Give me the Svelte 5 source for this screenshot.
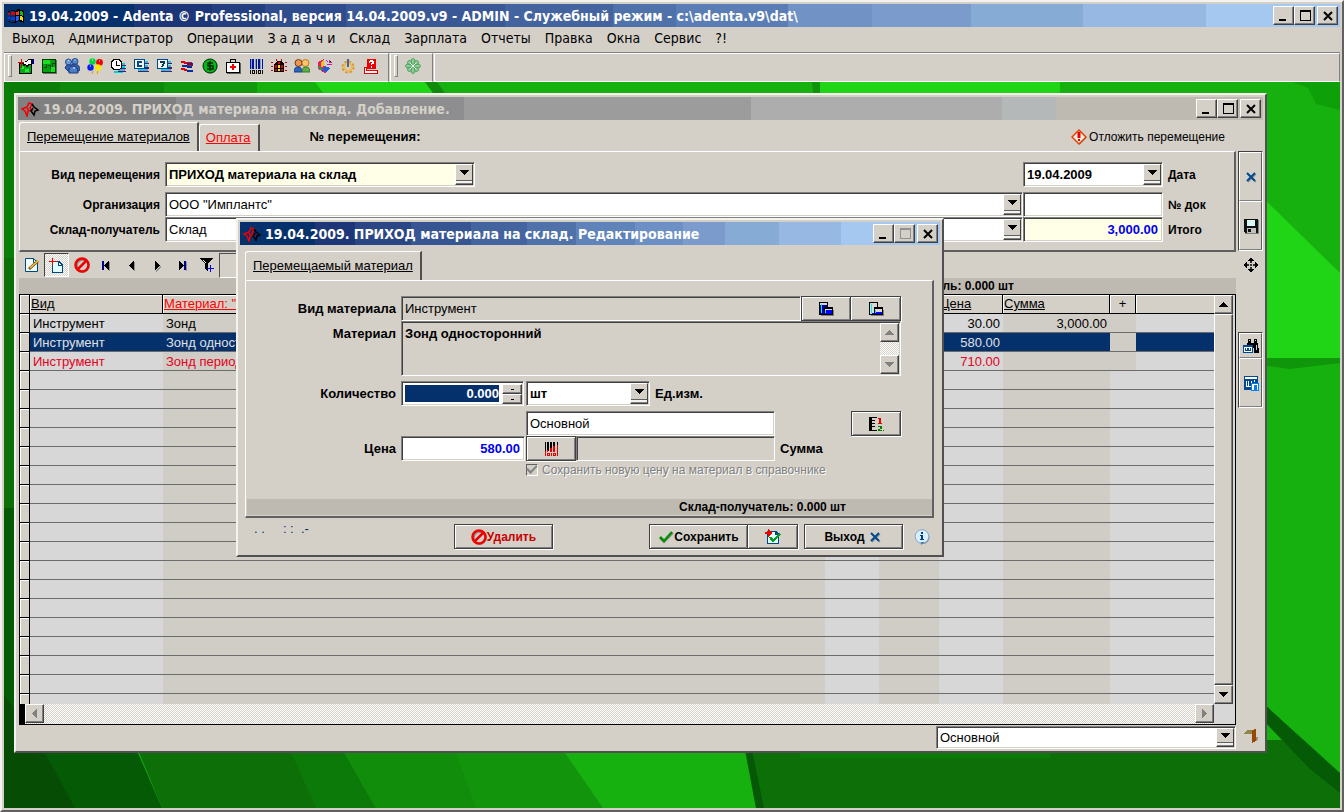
<script>
    const menu = [
        'Выход', 'Администратор', 'Операции', 'З а д а ч и', 'Склад', 'Зарплата',
        'Отчеты', 'Правка', 'Окна', 'Сервис', '?!',
    ];

    const tools = [
        { icon: 'card', label: 'Карточка' },
        { icon: 'schedule', label: 'Расписание' },
        { icon: 'people', label: 'Пациенты' },
        { icon: 'balloons', label: 'Дни рождения' },
        { icon: 'clock', label: 'Время' },
        { icon: 'calc', label: 'Счета' },
        { icon: 'seven', label: 'Неделя' },
        { icon: 'swap', label: 'Обмен' },
        { icon: 'money', label: 'Касса' },
        { icon: 'medkit', label: 'Аптечка' },
        { icon: 'barcode', label: 'Штрихкод' },
        { icon: 'store', label: 'Склад' },
        { icon: 'staff', label: 'Сотрудники' },
        { icon: 'chart', label: 'Диаграмма' },
        { icon: 'gear', label: 'Настройка' },
        { icon: 'help', label: 'Справка' },
    ];

    const gridTools = [
        { icon: 'edit', label: 'Изменить' },
        { icon: 'add', label: 'Добавить', pressed: true },
        { icon: 'forbid', label: 'Удалить' },
        { icon: 'first', label: 'Первая' },
        { icon: 'prev', label: 'Предыдущая' },
        { icon: 'next', label: 'Следующая' },
        { icon: 'last', label: 'Последняя' },
        { icon: 'filter', label: 'Фильтр' },
    ];

    const rows = [
        { kind: 'Инструмент', name: 'Зонд', price: '30.00', sum: '3,000.00' },
        { kind: 'Инструмент', name: 'Зонд односторонний', price: '580.00', sum: '' },
        { kind: 'Инструмент', name: 'Зонд периодонтальный', price: '710.00', sum: '', alert: true },
    ];
    const emptyRows = Array.from({ length: 40 });

    // icons with curves, drawn with smooth edges
    const smooth = ['people', 'balloons', 'money', 'staff', 'gear', 'clover', 'info', 'forbid', 'logo', 'warn', 'tick', 'cross', 'edit'];

    let selected = $state(1);
    let operation = $state('ПРИХОД материала на склад');
    let date = $state('19.04.2009');
    let organization = $state('ООО "Имплантс"');
    let store = $state('Склад');
    let docNumber = $state('');
    let total = $state('3,000.00');
    let quantity = $state('0.000');
    let unit = $state('шт');
    let price = $state('580.00');
</script>

{#snippet icon(name)}
    <svg class="icon" viewBox="0 0 16 16" aria-hidden="true" shape-rendering={smooth.includes(name) ? 'auto' : 'crispEdges'}>
        {#if name === 'card'}
            <path d="M1 5h13v11H1z" fill="#000" />
            <path d="M2 6h11v9H2z" fill="#00a818" />
            <path d="M3 8h3v3H3zM7 11h4v3H7z" fill="#20e828" />
            <path d="M5 4l3-1 2-2h4v6h-3l-2 3-1-3-3 1z" fill="#000" />
            <path d="M6 4h2l2-2h3v4h-3L9 8 8 6H6z" fill="#fff" />
            <path d="M0 4h6v1H0zM3 1h1v9H3z" fill="#e00000" />
            <path d="M14 1h2v5h-2z" fill="#000080" />
        {:else if name === 'schedule'}
            <path d="M2 2h14v14H2z" fill="#707070" />
            <path d="M1 1h14v14H1z" fill="#003800" />
            <path d="M2 2h12v12H2z" fill="#00a010" />
            <path d="M2 2h7v4H2zM10 9h4v5h-4z" fill="#18e020" />
            <path d="M3 9h2V6h1v4H3zM7 7h3v4H9V8H7zM11 5h3v1h-2v3h-1z" fill="#004800" />
        {:else if name === 'people'}
            <circle cx="4.500" cy="4" r="3" fill="#6c9cd8" stroke="#24488c" />
            <circle cx="11" cy="3.500" r="3" fill="#5486cc" stroke="#24488c" />
            <path d="M1 10q1-4 6-3l3-1q6 0 6 6l-3 2H5z" fill="#3464b0" stroke="#203c80" />
            <path d="M5 15q-1-7 4-7t5 7z" fill="#4c7cc4" stroke="#1c3878" />
            <path d="M4 2.500h1M10.500 2h1M9 10h2" stroke="#e8f4ff" />
        {:else if name === 'balloons'}
            <circle cx="5.500" cy="3.500" r="3.200" fill="#00d840" />
            <circle cx="12.500" cy="4.500" r="3.400" fill="#f00000" />
            <circle cx="3.500" cy="9.500" r="3.200" fill="#0020f0" />
            <circle cx="11" cy="9.500" r="3.200" fill="#ffe800" />
            <path d="M6 13l-1 3M11 13l-1 3" stroke="#e0a000" fill="none" />
            <path d="M5 2h1M12 3h1M3 8h1" stroke="#fff" />
        {:else if name === 'clock'}
            <path d="M9 5h6v2H9zM10 8h5v2h-5zM8 11h7v2H8zM4 13h9v2H4z" fill="#00d0e0" />
            <path d="M9 7h7v1H9zM10 10h6v1h-6zM8 13h8v1H8z" fill="#800060" />
            <path d="M3 1h6l3 3v6l-3 2H3L1 9V4z" fill="#000" />
            <path d="M4 2h4l3 3v4l-2 2H4L2 8V5z" fill="#fff" />
            <path d="M6 3h1v4h3v1H6z" fill="#000" />
        {:else if name === 'calc' || name === 'seven'}
            <path d="M11 3h4v2h-4zM11 7h4v2h-4zM5 11h10v2H5z" fill="#00d0e0" />
            <path d="M11 5h5v1h-5zM11 9h5v2h-5zM5 13h11v1H5z" fill="#800060" />
            <path d="M1 1h11v10H1z" fill="#00488c" />
            <path d="M2 2h9v8H2z" fill="#f4f4f4" />
            {#if name === 'calc'}
                <path d="M9 3H4v6h5V7H6V5h3z" fill="#00488c" />
            {:else}
                <path d="M4 3h5v2L7 9H5l2-4H4z" fill="#003c50" />
            {/if}
        {:else if name === 'swap'}
            <path d="M2 3h4v1h2v2H5V5H2zM8 4h5v1H8zM2 10h4v1h2v2H5v-1H2zM8 7h6v1H8z" fill="#e00000" />
            <path d="M8 5h6v2H8zM3 7h5v2H3zM8 8h5v2H8zM8 12h6v2H8z" fill="#0030a0" />
        {:else if name === 'money'}
            <circle cx="8.500" cy="8.500" r="7" fill="#707070" />
            <circle cx="8" cy="8" r="7" fill="#00b818" stroke="#003000" />
            <path d="M11 5H6v3h5v3H5M8 3v10" fill="none" stroke="#002800" stroke-width="1.500" />
        {:else if name === 'medkit'}
            <path d="M5 1h6v3h-1V2H6v2H5zM1 4h14v11H1z" fill="#000" />
            <path d="M2 5h12v9H2z" fill="#fff" />
            <path d="M7 6h2v2h2v2H9v2H7v-2H5V8h2z" fill="#f00000" />
            <path d="M2 15h14v1H2zM15 5h1v11h-1z" fill="#606060" />
        {:else if name === 'barcode'}
            <path d="M2 1h1v10H2zM4 1h2v10H4zM8 1h1v10H8zM10 1h2v10h-2zM14 1h1v10h-1z" fill="#001890" />
            <path d="M3 1h1v10H3zM7 1h1v10H7zM12 1h1v10h-1z" fill="#8898e0" />
            <path d="M2 12h1v4H2zM4 12h3v4H4zM8 12h1v4H8zM10 12h3v4h-3zM14 12h1v4h-1z" fill="#101010" />
            <path d="M5 13h1v2H5zM11 13h1v2h-1z" fill="#d4d0c8" />
        {:else if name === 'store'}
            <path d="M0 4h2v1H0zM0 8h2v1H0zM0 12h2v1H0zM14 4h2v1h-2zM14 8h2v1h-2zM14 12h2v1h-2zM5 1h1v2H5zM10 1h1v2h-1z" fill="#e00000" />
            <path d="M3 14V6l3-3h4l3 3v8z" fill="#000" />
            <path d="M4 7h2v3H4zM10 7h2v3h-2zM4 11h2v2H4zM10 11h2v2h-2zM7 4h2v2H7z" fill="#e00000" />
            <path d="M7 7h2v3H7zM7 11h2v2H7z" fill="#ffe800" />
        {:else if name === 'staff'}
            <circle cx="4.500" cy="5" r="3.500" fill="#e89850" stroke="#783818" />
            <circle cx="11.500" cy="5" r="3.500" fill="#ffc470" stroke="#c07818" />
            <path d="M0 14q0-5 4-5t4 5z" fill="#2868c0" stroke="#183c80" />
            <path d="M8 14q0-5 4-5t4 5z" fill="#60b048" stroke="#387828" />
        {:else if name === 'chart'}
            <path d="M1 4l6-3v7l6 2-5 5-7-4z" fill="#e02060" />
            <path d="M4 4l3-2v6L4 9z" fill="#f0c020" />
            <path d="M8 8l5 2-4 4-5-2z" fill="#2060d0" />
            <path d="M9 2l2 2M12 2v3l3-1M10 6h5" stroke="#c020a0" />
            <path d="M2 9l3 3" stroke="#20a040" stroke-width="2" />
        {:else if name === 'gear'}
            <circle cx="8" cy="9" r="5" fill="none" stroke="#d89838" stroke-width="3" stroke-dasharray="2.400 1.500" />
            <circle cx="8" cy="9" r="3.800" fill="none" stroke="#f0b858" stroke-width="2" />
            <path d="M8 1v8" stroke="#4068a0" stroke-width="2" />
        {:else if name === 'help'}
            <path d="M4 1h9v10H4z" fill="#f00000" />
            <path d="M6 3h1V2h3v1h1v3H9v1H8V5h1V4H7v1H6zM8 8h1v2H8z" fill="#fff" />
            <path d="M1 9h3v3h11v4H1z" fill="#e00000" />
            <path d="M2 10h1v3h11v2H2z" fill="#fff" />
        {:else if name === 'clover'}
            <g fill="#90cc90" stroke="#389858" stroke-width=".8">
                <ellipse cx="8" cy="3.500" rx="2" ry="3" />
                <ellipse cx="8" cy="12.500" rx="2" ry="3" />
                <ellipse cx="3.500" cy="8" rx="3" ry="2" />
                <ellipse cx="12.500" cy="8" rx="3" ry="2" />
                <circle cx="4.500" cy="4.500" r="2" />
                <circle cx="11.500" cy="4.500" r="2" />
                <circle cx="4.500" cy="11.500" r="2" />
                <circle cx="11.500" cy="11.500" r="2" />
            </g>
            <path d="M5 5l6 6M11 5l-6 6" stroke="#e8f8e8" />
        {:else if name === 'edit'}
            <path d="M1.500 1.500h8l4 4v9h-12z" fill="#f0fcff" stroke="#004880" />
            <path d="M9.500 1.500v4h4" fill="none" stroke="#004880" />
            <path d="M5 12l9-8" stroke="#705020" stroke-width="3" />
            <path d="M6 11l8.500-7.500" stroke="#ffc830" stroke-width="1.500" />
        {:else if name === 'add'}
            <path d="M3 4h7l4 4v8H3z" fill="#004880" />
            <path d="M4 5h5v4h4v6H4z" fill="#e0fcff" />
            <path d="M10 6l2 2h-2z" fill="#fff" />
            <path d="M0 4h8v1H0zM3 1h1v7H3z" fill="#f00000" />
        {:else if name === 'forbid'}
            <circle cx="8.800" cy="8.800" r="6" fill="none" stroke="#909090" stroke-width="2.200" />
            <circle cx="8" cy="8" r="6.500" fill="none" stroke="#f00000" stroke-width="2.500" />
            <path d="M4 12l8-8" stroke="#f00000" stroke-width="2.500" />
        {:else if name === 'first'}
            <path d="M3 4h2v9H3z" fill="#000080" />
            <path d="M5 8.500l5-5v10z" fill="#000" />
            <path d="M10 5h1v9h-1z" fill="#909090" />
        {:else if name === 'prev'}
            <path d="M5 8.500l5-5v10z" fill="#000" />
            <path d="M10 5h1v9h-1z" fill="#909090" />
        {:else if name === 'next'}
            <path d="M7 14.500l5-5z" stroke="#909090" />
            <path d="M6 3.500l5 5-5 5z" fill="#000" />
        {:else if name === 'last'}
            <path d="M5 3.500l5 5-5 5z" fill="#000" />
            <path d="M10 4h2v9h-2z" fill="#000080" />
            <path d="M12 5h1v9h-1z" fill="#909090" />
        {:else if name === 'filter'}
            <path d="M1 1h13L9 7v8l-3-3V7z" fill="#000" />
            <path d="M4 3h1v1h1v1h1v1H6V5H5V4H4z" fill="#fff" />
            <path d="M11 8h1v3h3v1h-3v3h-1v-3H8v-1h3z" fill="#0000f0" />
        {:else if name === 'warn'}
            <path d="M9 1.500l7 7-7 7-7-7z" fill="#909090" />
            <path d="M8 1l7 7-7 7-7-7z" fill="#f4ece4" stroke="#e04400" stroke-width="1.500" />
            <path d="M8 3v6" stroke="#f00000" stroke-width="3" />
            <path d="M7 11h2" stroke="#f00000" stroke-width="2" />
        {:else if name === 'cross'}
            <path d="M5 5l8 8M13 5l-8 8" stroke="#909090" stroke-width="1.500" />
            <path d="M4 4l8 8M12 4l-8 8" stroke="#004890" stroke-width="2" />
        {:else if name === 'disk'}
            <path d="M2 2h14v14H2z" fill="#808080" />
            <path d="M1 1h14v14H2L1 14z" fill="#101010" />
            <path d="M4 2h8v6H4z" fill="#d8f8f8" />
            <path d="M4 10h9v5H4z" fill="#c0c0c0" />
            <path d="M5 11h3v3H5z" fill="#101010" />
        {:else if name === 'move'}
            <path d="M8 0l3 4H5zM8 16l3-4H5zM0 8l4-3v6zM16 8l-4-3v6z" fill="#000" />
            <path d="M7 4h2v2H7zM7 10h2v2H7zM4 7h2v2H4zM10 7h2v2h-2zM7 7h2v2H7z" fill="#303030" />
        {:else if name === 'find'}
            <path d="M5 1h3v4H5zM11 1h3v4h-3zM8 5h3v4H8zM4 5h4v6H4zM10 5h5v5h1v5h-5z" fill="#000" />
            <path d="M6 2h1v1H6zM12 2h1v1h-1zM13 7h1v5h-1z" fill="#d0d0d0" />
            <path d="M0 7h10v8H0z" fill="#004890" />
            <path d="M1 9h8v5H1z" fill="#fff" />
            <path d="M2 10h1v2h1v-2h2v2h1v-2h1v3H2z" fill="#004890" />
        {:else if name === 'word'}
            <path d="M1 1h14v14H1z" fill="#004890" />
            <path d="M2 2h12v2H2zM3 6h1v5h1V6h1v5h2V6h1v6H3zM11 5h1v2h-1z" fill="#fff" />
            <path d="M8 8h8v8H8z" fill="#0080f0" />
            <path d="M9 9h6v6h-1v-5h-3v5H9z" fill="#fff" />
        {:else if name === 'exit'}
            <path d="M1 5l4-4h9v4z" fill="#8c8848" />
            <path d="M10 1l4-1v12l-4 2z" fill="#984800" />
            <path d="M14 8l3 1-3 4z" fill="#909090" />
        {:else if name === 'building' || name === 'buildingAlt'}
            <path d="M3 15h13V9h-1v5H3z" fill="#808080" />
            <path d="M1 1h9v5h5v8H1z" fill="#000" />
            <path d="M2 2h7v4H6v7H2zM7 8h7v5H7z" fill="#d8d8d8" />
            {#if name === 'building'}
                <path d="M2 4h7v2H6v7H2z" fill="#0000a0" />
                <path d="M7 9h7v4H7z" fill="#0000ff" />
            {:else}
                <path d="M7 11h7v2H7zM4 12h2v1H4z" fill="#0000ff" />
            {/if}
            <path d="M3 3h1v9H3zM7 9h1v3H7z" fill="#00f0f0" />
        {:else if name === 'redcode'}
            <path d="M2 1h1v9H2zM4 1h2v9H4zM7 1h2v6H7zM10 1h2v4h-2zM14 1h1v3h-1z" fill="#000" />
            <path d="M2 10h1v5H2zM4 9h1v2H4zM7 7h2v4H7zM10 5h2v6h-2zM14 4h1v11h-1zM4 12h3v3H4zM8 12h1v3H8zM10 12h3v3h-3z" fill="#e00000" />
            <path d="M5 13h1v1H5zM11 13h1v1h-1z" fill="#d4d0c8" />
        {:else if name === 'ruler'}
            <path d="M1 1h8v1H4v2h3v1H4v2h3v1H4v2h3v1H4v3h5v1H1z" fill="#000" />
            <path d="M10 2h3v5h1v1h-4V7h1V3h-1z" fill="#e00000" />
            <path d="M10 10h4v3h-2v1h2v1h-4v-2h2v-2h-2zM15 14h1v1h-1z" fill="#008000" />
        {:else if name === 'tick'}
            <path d="M2 9l4 4 9-9" fill="none" stroke="#909090" stroke-width="2" />
            <path d="M2 8l4 4 8-9" fill="none" stroke="#009000" stroke-width="2.500" />
        {:else if name === 'sheet'}
            <path d="M2 2h9l3 3v10H2z" fill="#004880" />
            <path d="M3 3h7v3h3v8H3z" fill="#e0fcff" />
            <path d="M5 8l3 4 7-7" fill="none" stroke="#00a020" stroke-width="2.500" />
            <path d="M0 3h3V0l5 4-5 4V5H0z" fill="#f00000" />
        {:else if name === 'info'}
            <circle cx="9" cy="8.500" r="6.500" fill="#8090a0" />
            <circle cx="8" cy="7.500" r="6.800" fill="#d8f0ff" stroke="#80a8d0" />
            <path d="M7 13v3l4-3z" fill="#5080b0" />
            <path d="M7 3h2v2H7zM6 6h3v4h1v1H6v-1h1V7H6z" fill="#003c90" />
        {:else if name === 'logo'}
            <path d="M0 8l5-2 2-4 3 1-2 4 2 2-4 1-1 5-2-5zM5 7l2 3" fill="none" stroke="#f00000" stroke-width="1.500" />
            <path d="M10 3l2 3 4 3-3 1-1 4-3-4 2-3" fill="none" stroke="#000" stroke-width="1.500" />
        {:else if name === 'windows'}
            <path d="M7 3l3-2 6 2v12l-5-2-4 2zM0 3h2v1H0zM3 2h4v1H3zM0 13h2v1H0zM3 14h4v1H3z" fill="#000" />
            <path d="M0 5h2v2H0zM3 4h4v3H3z" fill="#e00000" />
            <path d="M0 9h2v2H0zM3 9h4v3H3z" fill="#0040e0" />
            <path d="M8 4l3-1v4H8z" fill="#f04020" />
            <path d="M12 3l3 1v4l-3-1z" fill="#00c020" />
            <path d="M8 8h3v4l-3 1z" fill="#2060f0" />
            <path d="M12 8l3 1v4l-3-1z" fill="#f8e000" />
        {/if}
    </svg>
{/snippet}

{#snippet caption(text, look, logo, fixed)}
    <header class="caption {look}">
        {@render icon(logo)}
        <h2>{text}</h2>
        <button class="sys" aria-label="Свернуть">
            <svg viewBox="0 0 16 14" shape-rendering="crispEdges"><path d="M3 10h7v2H3z" fill="#000" /></svg>
        </button>
        <button class="sys" aria-label="Развернуть" disabled={fixed}>
            <svg viewBox="0 0 16 14" shape-rendering="crispEdges">
                <path d="M3 1h11v11H3zM4 3v8h9V3z" fill-rule="evenodd" fill={fixed ? '#909090' : '#000'} />
            </svg>
        </button>
        <button class="sys close" aria-label="Закрыть">
            <svg viewBox="0 0 16 14"><path d="M4 3l8 8M12 3l-8 8" stroke="#000" stroke-width="2" /></svg>
        </button>
    </header>
{/snippet}

{#snippet arrow(dir)}
    <svg class="arrow {dir}" viewBox="0 0 9 5" aria-hidden="true" shape-rendering="crispEdges"><path d="M0 0h9L4.500 5z" fill="currentColor" /></svg>
{/snippet}

<div class="app">
    {@render caption('19.04.2009 - Adenta © Professional, версия 14.04.2009.v9 - ADMIN - Служебный режим - c:\\adenta.v9\\dat\\', 'main', 'windows', false)}

    <nav class="menu">
        {#each menu as item}
            <button>{item}</button>
        {/each}
    </nav>

    <div class="toolbars">
        <div class="toolbar">
            {#each tools as tool}
                <button class="tool" aria-label={tool.label}>{@render icon(tool.icon)}</button>
            {/each}
        </div>
        <div class="toolbar">
            <button class="tool" aria-label="Adenta">{@render icon('clover')}</button>
        </div>
        <div class="toolbar rest"></div>
    </div>

    <main class="desktop">
        <svg class="wallpaper" viewBox="4 82 1336 726" preserveAspectRatio="none" aria-hidden="true">
            <path d="M4 82h1336v726H4z" fill="#17b10f" />
            <path d="M4 82h56v176H4z" fill="#0b7e08" />
            <path d="M60 82h104v20H60z" fill="#0e8a0a" />
            <path d="M164 82h93v20h-93z" fill="#11980c" />
            <path d="M315 82h115l20 20h-120z" fill="#20d515" />
            <path d="M425 82h12l10 14h-12z" fill="#0f8a0b" />
            <path d="M812 82h8v20h-6z" fill="#11940c" />
            <path d="M820 82h240v20H820z" fill="#20d515" />
            <path d="M1292 82h48v28l-24-6-8-16z" fill="#0ea009" />
            <path d="M1260 195l80 78v85h-80z" fill="#20d515" />
            <path d="M1260 358h80v5l-50 6-30-4z" fill="#0f960b" />
            <path d="M4 258h20v250H4z" fill="#0d6f07" />
            <path d="M4 508h20l114 245 24 55H4z" fill="#055a05" />
            <path d="M4 695l41 58 30 55H4z" fill="#064c05" />
            <path d="M138 750h154l28 58H162z" fill="#0d6f07" />
            <path d="M290 750h53l33 58h-60z" fill="#0c7a08" />
            <path d="M343 750h120l18 58H376z" fill="#118c0b" />
            <path d="M455 750h108l40 58H476z" fill="#12950d" />
            <path d="M746 750h594v58H756z" fill="#0d6f07" />
            <path d="M745 750h7l12 58h-8z" fill="#055805" />
            <path d="M800 750h250v8H800z" fill="#0c7a08" />
            <path d="M1260 740h80v68h-80z" fill="#0d6f07" />
            <path d="M1260 700l80 73v20l-30-24-50-52z" fill="#055a05" />
            <path d="M1260 700l80 73v-73z" fill="#17b10f" />
        </svg>

        <section class="window doc">
            {@render caption('19.04.2009. ПРИХОД материала на склад. Добавление.', 'inactive', 'logo', false)}

            <div class="tabs">
                <button class="tab active">Перемещение материалов</button>
                <button class="tab pay">Оплата</button>
                <strong>№ перемещения:</strong>
                <button class="postpone">{@render icon('warn')}Отложить перемещение</button>
            </div>

            <div class="columns">
                <div class="content">
                    <form class="panel fields">
                        <label for="operation">Вид перемещения</label>
                        <span class="combo cream lead short">
                            <select id="operation" bind:value={operation}><option>ПРИХОД материала на склад</option></select>
                            <i>{@render arrow('down')}</i>
                        </span>
                        <span class="combo">
                            <select id="date" class="bold" bind:value={date}><option>19.04.2009</option></select>
                            <i>{@render arrow('down')}</i>
                        </span>
                        <label class="after" for="date">Дата</label>

                        <label class="second" for="organization">Организация</label>
                        <span class="combo lead second">
                            <select id="organization" bind:value={organization}><option>ООО "Имплантс"</option></select>
                            <i>{@render arrow('down')}</i>
                        </span>
                        <input id="docNumber" class="field second" type="text" bind:value={docNumber} />
                        <label class="after second" for="docNumber">№ док</label>

                        <label for="store">Склад-получатель</label>
                        <span class="combo lead">
                            <select id="store" bind:value={store}><option>Склад</option></select>
                            <i>{@render arrow('down')}</i>
                        </span>
                        <input id="total" class="field cream money" type="text" bind:value={total} />
                        <label class="after" for="total">Итого</label>
                    </form>

                    <div class="grid-tools">
                        {#each gridTools as tool}
                            <button class="tool" class:pressed={tool.pressed} aria-label={tool.label}>{@render icon(tool.icon)}</button>
                        {/each}
                        <span class="well"></span>
                    </div>

                    <p class="band">Склад-получатель: 0.000 шт</p>

                    <div class="grid">
                        <div class="rows">
                            <table>
                                <colgroup>
                                    <col class="w-mark" /><col class="w-kind" /><col /><col class="w-qty" /><col class="w-unit" />
                                    <col class="w-price" /><col class="w-sum" /><col class="w-plus" /><col class="w-rest" />
                                </colgroup>
                                <thead>
                                    <tr>
                                        <th></th>
                                        <th>Вид</th>
                                        <th class="red">Материал: "зонд"</th>
                                        <th>Кол-во</th>
                                        <th>Ед.изм.</th>
                                        <th>Цена</th>
                                        <th>Сумма</th>
                                        <th class="plus">+</th>
                                        <th></th>
                                    </tr>
                                </thead>
                                <tbody>
                                    {#each rows as row, i}
                                        <tr class:selected={i === selected} class:red={row.alert} onclick={() => (selected = i)}>
                                            <td class="mark"></td>
                                            <td>{row.kind}</td>
                                            <td class="dark">{row.name}</td>
                                            <td></td>
                                            <td class="dark"></td>
                                            <td class="num">{row.price}</td>
                                            <td class="dark num">{row.sum}</td>
                                            <td class="dark own"></td>
                                            <td></td>
                                        </tr>
                                    {/each}
                                    {#each emptyRows as _}
                                        <tr>
                                            <td class="mark"></td>
                                            <td></td>
                                            <td class="dark"></td>
                                            <td></td>
                                            <td class="dark"></td>
                                            <td></td>
                                            <td class="dark"></td>
                                            <td></td>
                                            <td></td>
                                        </tr>
                                    {/each}
                                </tbody>
                            </table>
                        </div>
                        <div class="vscroll">
                            <button aria-label="Вверх">{@render arrow('up')}</button>
                            <span class="thumb"></span>
                            <button aria-label="Вниз">{@render arrow('down')}</button>
                        </div>
                        <div class="hscroll">
                            <button aria-label="Влево" disabled>{@render arrow('left')}</button>
                            <button aria-label="Вправо" disabled>{@render arrow('right')}</button>
                        </div>
                    </div>
                </div>

                <aside class="side">
                    <div class="rail">
                        <button class="tall" aria-label="Закрыть">{@render icon('cross')}</button>
                        <button class="tall" aria-label="Сохранить">{@render icon('disk')}</button>
                    </div>
                    <button class="tool" aria-label="Переместить">{@render icon('move')}</button>
                    <div class="rail">
                        <button aria-label="Найти">{@render icon('find')}</button>
                        <button class="tall" aria-label="Печать">{@render icon('word')}</button>
                    </div>
                </aside>
            </div>

            <footer class="doc-footer">
                <span class="combo">
                    <select aria-label="Вид учета"><option>Основной</option></select>
                    <i>{@render arrow('down')}</i>
                </span>
                <button class="tool" aria-label="Выход">{@render icon('exit')}</button>
            </footer>
        </section>

        <section class="window dialog" role="dialog" aria-label="Редактирование">
            {@render caption('19.04.2009. ПРИХОД материала на склад. Редактирование', 'current', 'logo', true)}

            <div class="dialog-body">
                <div class="tabs">
                    <button class="tab active">Перемещаемый материал</button>
                </div>

                <div class="panel">
                    <form class="edit">
                        <label for="kind">Вид материала</label>
                        <div class="line">
                            <input id="kind" class="field grey grow" type="text" value="Инструмент" readonly />
                            <span class="btn-group">
                                <button type="button" class="btn" aria-label="Выбрать вид">{@render icon('building')}</button>
                                <button type="button" class="btn" aria-label="Открыть вид">{@render icon('buildingAlt')}</button>
                            </span>
                        </div>

                        <label for="material">Материал</label>
                        <div class="line memo">
                            <textarea id="material" readonly>Зонд односторонний</textarea>
                            <span class="vscroll">
                                <button type="button" aria-label="Вверх" disabled>{@render arrow('up')}</button>
                                <span class="track"></span>
                                <button type="button" aria-label="Вниз" disabled>{@render arrow('down')}</button>
                            </span>
                        </div>

                        <label class="apart" for="quantity">Количество</label>
                        <div class="line apart">
                            <span class="spin">
                                <input id="quantity" type="text" bind:value={quantity} />
                                <span class="steps">
                                    <button type="button" aria-label="Больше"></button>
                                    <button type="button" aria-label="Меньше"></button>
                                </span>
                            </span>
                            <span class="combo unit">
                                <select id="unit" class="bold" bind:value={unit}><option>шт</option></select>
                                <i>{@render arrow('down')}</i>
                            </span>
                            <label class="after" for="unit">Ед.изм.</label>
                        </div>

                        <div class="line apart from-second">
                            <input class="field account" type="text" value="Основной" aria-label="Вид учета" />
                            <button type="button" class="btn far" aria-label="Нумерация">{@render icon('ruler')}</button>
                        </div>

                        <label for="price">Цена</label>
                        <div class="line">
                            <input id="price" class="field money price" type="text" bind:value={price} />
                            <button type="button" class="btn" aria-label="Штрихкод">{@render icon('redcode')}</button>
                            <input id="sum" class="field grey sum" type="text" readonly />
                            <label class="after" for="sum">Сумма</label>
                        </div>

                        <label class="check from-second">
                            <input type="checkbox" checked disabled />
                            Сохранить новую цену на материал в справочнике
                        </label>
                    </form>

                    <p class="band">Склад-получатель: 0.000 шт</p>
                </div>

                <footer class="actions">
                    <span class="stamp">. .&nbsp;&nbsp;&nbsp;&nbsp;&nbsp;: :&nbsp; .-</span>
                    <button class="btn wide delete">{@render icon('forbid')}Удалить</button>
                    <span class="btn-group">
                        <button class="btn wide">{@render icon('tick')}Сохранить</button>
                        <button class="btn" aria-label="Сохранить и добавить">{@render icon('sheet')}</button>
                    </span>
                    <button class="btn wide leave">Выход {@render icon('cross')}</button>
                    <button class="info" aria-label="Информация">{@render icon('info')}</button>
                </footer>
            </div>
        </section>
    </main>
</div>

<style>
    :global(body) {
        background: #d4d0c8;
    }

    .app {
        --face: #d4d0c8;
        --navy: #04306c;
        box-sizing: border-box;
        display: flex;
        flex-direction: column;
        height: 100vh;
        padding: 2px;
        border: 2px solid;
        border-color: #f4f2ee #606060 #606060 #f4f2ee;
        background: var(--face);
        color: #000;
        font: 13px/16px 'Liberation Sans', Arial, sans-serif;
        overflow: hidden;
    }

    .app * {
        box-sizing: border-box;
    }

    button,
    input,
    select,
    textarea {
        margin: 0;
        padding: 0;
        border: 0;
        border-radius: 0;
        background: none;
        color: inherit;
        font: inherit;
        outline: none;
    }

    .icon {
        flex: none;
        width: 16px;
        height: 16px;
    }

    /* captions */
    .caption {
        flex: none;
        display: flex;
        align-items: center;
        height: 23px;
        padding: 0 2px;
        color: #fff;
    }

    .caption .icon {
        width: 20px;
    }

    .caption h2 {
        flex: 1;
        min-width: 0;
        margin: 0 0 0 3px;
        overflow: hidden;
        white-space: nowrap;
        font: bold 14px/20px 'DejaVu Sans Condensed', 'Noto Sans', sans-serif;
    }

    .main {
        background: linear-gradient(90deg, #04306c 9.7%, #1c3678 0 15.6%, #243f80 0 19.5%, #2f4c8c 0 25.6%, #3a5896 0 37.500%, #4464a0 0 45.600%, #5072ab 0 50.300%, #5b7db5 0 58.700%, #7092c4 0 65%, #7b9bcd 0 72.400%, #86abd5 0 80.800%, #96b8e2 0 90%, #a4c8f0 0);
    }

    .inactive {
        background: linear-gradient(90deg, #808080 12.7%, #8e8e90 0 35.8%, #9c9c9c 0 58.9%, #adadad 0 79%, #b4b8b8 0 83.4%, #bebab2 0);
        color: var(--face);
    }

    .current {
        background: linear-gradient(90deg, #04306c 10.7%, #1c3678 0 16.4%, #2b4685 0 24.4%, #375592 0 33%, #4464a0 0 41%, #5072ab 0 48%, #6083b9 0 56.4%, #6c8fc5 0 63.3%, #7b9bcd 0 69.3%, #86abd5 0 77%, #96b8e2 0 85.9%, #a4c8f0 0);
    }

    .sys,
    .vscroll button,
    .hscroll button,
    .thumb,
    .steps button,
    .combo i {
        border: 1px solid;
        border-color: #fff #404040 #404040 #fff;
        box-shadow: inset -1px -1px #808080;
        background: var(--face);
    }

    .sys {
        flex: none;
        width: 21px;
        height: 19px;
        line-height: 0;
    }

    .sys svg {
        width: 16px;
        height: 14px;
    }

    .close {
        margin-left: 2px;
    }

    /* menu and toolbars */
    .menu {
        flex: none;
        display: flex;
        height: 25px;
        padding-left: 8px;
        gap: 14px;
        font: 14px/22px 'DejaVu Sans Condensed', 'Noto Sans', sans-serif;
    }

    .menu button {
        height: 22px;
        white-space: nowrap;
    }

    .toolbars {
        flex: none;
        display: flex;
        height: 30px;
        border-top: 1px solid #808080;
    }

    .toolbar {
        display: flex;
        align-items: center;
        padding: 0 6px 3px 3px;
        border: 1px solid;
        border-color: #fff #808080 #fff #fff;
    }

    .toolbar::before {
        width: 2px;
        height: 20px;
        margin-right: 2px;
        border: 1px solid;
        border-color: #fff #808080 #808080 #fff;
        content: '';
    }

    .toolbar + .toolbar {
        margin-left: 1px;
    }

    .rest {
        flex: 1;
    }

    .rest::before {
        display: none;
    }

    .tool {
        display: flex;
        align-items: center;
        justify-content: center;
        width: 23px;
        height: 24px;
    }

    .toolbar + .toolbar .tool {
        width: 26px;
    }

    /* desktop */
    .desktop {
        flex: 1;
        display: flex;
        position: relative;
        min-height: 0;
        padding: 11px 73px 55px 10px;
    }

    .wallpaper {
        position: absolute;
        inset: 0;
        width: 100%;
        height: 100%;
    }

    .window {
        display: flex;
        flex-direction: column;
        position: relative;
        padding: 2px;
        border: 2px solid;
        border-color: #f4f2ee #505050 #505050 #f4f2ee;
        background: var(--face);
    }

    .doc {
        flex: 1;
        min-width: 0;
    }

    .dialog {
        position: absolute;
        left: 232px;
        top: 136px;
        width: 708px;
    }

    .tabs {
        flex: none;
        display: flex;
        align-items: flex-end;
        height: 29px;
        padding-left: 1px;
    }

    .tab {
        height: 27px;
        padding: 0 7px 0 6px;
        border: 1px solid #fff;
        border-right: 2px solid #505050;
        border-bottom: 0;
        border-radius: 3px 0 0 0;
        text-decoration: underline;
        white-space: nowrap;
    }

    .tab.active {
        height: 29px;
        padding-left: 7px;
    }

    .pay {
        color: #f00;
    }

    .doc .tabs {
        height: 31px;
    }

    .tabs strong {
        margin: 0 auto 6px 50px;
    }

    .postpone {
        display: flex;
        align-items: center;
        margin: 0 38px 6px 0;
        gap: 2px;
        font-size: 12px;
    }

    .panel {
        border: 1px solid #fff;
        border-right: 2px solid #606060;
        border-bottom: 2px solid #606060;
    }

    .columns {
        flex: 1;
        display: flex;
        min-height: 0;
    }

    .content {
        flex: 1;
        display: flex;
        flex-direction: column;
        min-width: 0;
        padding-left: 1px;
    }

    label {
        font-weight: bold;
        text-align: right;
        white-space: nowrap;
    }

    label.after {
        text-align: left;
        padding-left: 5px;
    }

    .bold {
        font-weight: bold;
    }

    .fields {
        flex: none;
        display: grid;
        grid-template-columns: 140px minmax(0, 1fr) 140px 71px;
        align-items: center;
        align-content: start;
        height: 101px;
        padding-top: 10px;
    }

    .fields label {
        font-size: 12px;
    }

    .lead {
        margin-left: 5px;
    }

    .second {
        margin-top: 5px;
    }

    .field,
    .combo,
    .memo,
    .spin {
        height: 25px;
        border: 1px solid;
        border-color: #808080 #fff #fff #808080;
        background: #fff;
        box-shadow: inset 1px 1px #404040, inset -1px -1px var(--face);
    }

    .field {
        min-width: 0;
        padding: 0 4px 0 3px;
    }

    .cream {
        background: #ffffe8;
        font-weight: bold;
    }

    .grey {
        background: var(--face);
    }

    .money {
        color: #0000f0;
        font-weight: bold;
        text-align: right;
    }

    .combo {
        display: flex;
        min-width: 0;
        padding: 1px 1px 1px 1px;
    }

    .combo select {
        flex: 1;
        min-width: 0;
        padding-left: 2px;
        appearance: none;
    }

    .combo i {
        display: flex;
        align-items: center;
        justify-content: center;
        width: 18px;
        padding-bottom: 4px;
        pointer-events: none;
        box-shadow: inset 0 -1px #808080, inset 0 -3px #f4f2ee, inset 0 -4px #606060;
    }

    .short {
        width: 310px;
    }

    .arrow {
        width: 9px;
        height: 5px;
    }

    .up {
        transform: rotate(180deg);
    }

    .left {
        transform: rotate(90deg);
    }

    .right {
        transform: rotate(-90deg);
    }

    /* materials list */
    .grid-tools {
        flex: none;
        display: flex;
        height: 26px;
        padding-top: 1px;
    }

    .grid-tools .tool {
        width: 25px;
        height: 24px;
    }

    .pressed {
        border: 1px solid;
        border-color: #404040 #fff #fff #404040;
        background: repeating-conic-gradient(#fff 0 25%, #d4d0c8 0 50%) 0 0 / 2px 2px;
    }

    .well {
        flex: 1;
        margin-right: 300px;
        border: 1px solid;
        border-color: #505050 #fff #fff #505050;
    }

    .band {
        flex: none;
        margin: 0;
        padding-right: 222px;
        background: #bebab2;
        font-size: 12px;
        font-weight: bold;
        text-align: right;
    }

    .grid {
        flex: 1;
        display: grid;
        grid-template: minmax(0, 1fr) 20px / minmax(0, 1fr) 21px;
        min-height: 0;
        border: 1px solid #000;
        background: #d7d7d7;
    }

    .rows {
        overflow: hidden;
    }

    table {
        width: 100%;
        border-collapse: separate;
        border-spacing: 0;
        table-layout: fixed;
    }

    .w-mark { width: 10px; }
    .w-kind { width: 133px; }
    .w-qty { width: 54px; }
    .w-unit { width: 60px; }
    .w-price { width: 64px; }
    .w-sum { width: 107px; }
    .w-plus { width: 26px; }
    .w-rest { width: 78px; }

    th,
    td {
        height: 19px;
        overflow: hidden;
        white-space: nowrap;
        line-height: 16px;
    }

    th {
        padding: 0 1px;
        border-right: 1px solid #000;
        border-bottom: 1px solid #000;
        background: var(--face);
        box-shadow: inset 1px 1px #fff;
        font-weight: normal;
        text-align: left;
        text-decoration: underline;
    }

    th:last-child {
        border-right: 0;
    }

    th.plus {
        text-align: center;
        text-decoration: none;
    }

    td {
        padding: 2px 3px 0;
        border-bottom: 1px solid #6c6c6c;
        background: #d7d7d7;
    }

    td.dark {
        background: #d0cdc6;
    }

    .num {
        text-align: right;
    }

    td.mark {
        border-right: 1px solid #000;
        border-bottom-color: #000;
        background: var(--face);
        box-shadow: inset 1px 1px #fff;
    }

    .selected td:not(.mark, .own) {
        background: var(--navy);
        color: #e0e0e0;
    }

    .red {
        color: #e60020;
    }

    th.red {
        color: #f00;
    }

    .vscroll {
        display: flex;
        flex-direction: column;
        padding-right: 2px;
    }

    .vscroll button,
    .hscroll button {
        display: flex;
        align-items: center;
        justify-content: center;
        width: 19px;
        height: 19px;
    }

    .thumb {
        flex: 1;
    }

    .hscroll {
        display: flex;
        justify-content: space-between;
        border-left: 5px solid #000;
        background: repeating-conic-gradient(#fff 0 25%, #d4d0c8 0 50%) 0 0 / 2px 2px;
    }

    .vscroll button:disabled,
    .hscroll button:disabled {
        color: #808080;
    }

    .side {
        flex: none;
        display: flex;
        flex-direction: column;
        align-items: flex-end;
        width: 27px;
    }

    .side .tool {
        width: 25px;
        margin: 2px 0 55px;
    }

    .rail {
        width: 25px;
        border: 1px solid;
        border-color: #404040 #fff #fff #404040;
    }

    .rail button {
        display: flex;
        align-items: center;
        justify-content: center;
        width: 100%;
        height: 25px;
        border: 1px solid;
        border-color: #fff #606060 #808080 #fff;
    }

    .rail .tall {
        height: 49px;
    }

    .doc-footer {
        flex: none;
        display: flex;
        justify-content: flex-end;
        height: 24px;
        gap: 1px;
    }

    .doc-footer .combo {
        width: 300px;
        height: 23px;
        margin-top: 1px;
    }

    .doc-footer .tool {
        width: 26px;
    }

    /* editing dialog */
    .dialog-body {
        padding: 6px 6px 4px 5px;
    }

    .dialog-body .tabs {
        padding-left: 0;
    }

    .edit {
        display: grid;
        grid-template-columns: 150px minmax(0, 1fr);
        column-gap: 5px;
        padding: 15px 31px 21px 0;
    }

    .edit > label:not(.check) {
        line-height: 25px;
    }

    .apart {
        margin-top: 5px;
    }

    .line {
        display: flex;
        align-items: center;
    }

    .grow {
        flex: 1;
    }

    .from-second {
        grid-column: 2;
        margin-left: 125px;
    }

    .memo {
        align-items: stretch;
        height: 55px;
        padding: 1px;
        background: var(--face);
    }

    .memo textarea {
        flex: 1;
        padding: 3px 2px;
        font-weight: bold;
        resize: none;
    }

    .memo .vscroll {
        padding-right: 0;
    }

    .track {
        flex: 1;
        background: repeating-conic-gradient(#fff 0 25%, #d4d0c8 0 50%) 0 0 / 2px 2px;
    }

    .spin {
        display: flex;
        width: 123px;
        padding: 2px 1px 1px 3px;
    }

    .spin input {
        flex: 1;
        min-width: 0;
        height: 17px;
        margin-top: 1px;
        background: var(--navy);
        color: #fff;
        font-weight: bold;
        text-align: right;
    }

    .steps {
        display: flex;
        flex-direction: column;
        width: 20px;
        margin-left: 3px;
    }

    .steps button {
        display: flex;
        flex: 1;
        align-items: center;
        justify-content: center;
    }

    .steps button::before {
        width: 3px;
        height: 1px;
        background: #000;
        content: '';
    }

    .unit {
        width: 124px;
        margin-left: 2px;
    }

    .account {
        width: 249px;
    }

    .far {
        margin-left: auto;
    }

    .price {
        width: 124px;
        margin-right: 1px;
    }

    .sum {
        width: 199px;
    }

    .btn {
        display: flex;
        flex: none;
        align-items: center;
        justify-content: center;
        width: 50px;
        height: 25px;
        border: 1px solid #404040;
        box-shadow: inset 1px 1px #fff, inset -1px -1px #808080, 1px 1px #fff;
        font-size: 12px;
        font-weight: bold;
    }

    .btn-group {
        display: flex;
    }

    .btn-group .btn + .btn {
        border-left: 0;
    }

    .wide {
        width: 99px;
    }

    .leave {
        gap: 2px;
    }

    .check {
        display: flex;
        align-items: center;
        height: 17px;
        gap: 4px;
        color: #808080;
        font-size: 12px;
        font-weight: normal;
        text-shadow: 1px 1px #fff;
    }

    .check input {
        display: flex;
        align-items: center;
        justify-content: center;
        width: 12px;
        height: 12px;
        border: 1px solid;
        border-color: #606060 #fff #fff #606060;
        appearance: none;
    }

    .check input::before {
        width: 8px;
        height: 4px;
        margin-bottom: 3px;
        border: solid #808080;
        border-width: 0 0 2px 2px;
        transform: rotate(-45deg);
        content: '';
    }

    .dialog .band {
        margin: 0 0 1px 1px;
        padding-right: 86px;
    }

    .actions {
        display: flex;
        align-items: center;
        padding: 6px 4px 0 9px;
    }

    .stamp {
        width: 200px;
        height: 24px;
        line-height: 8px;
        color: var(--navy);
    }

    .delete {
        margin-right: auto;
        color: #c80000;
    }

    .actions .btn-group {
        margin-right: 6px;
    }

    .info {
        margin-left: 11px;
        line-height: 0;
    }
</style>
